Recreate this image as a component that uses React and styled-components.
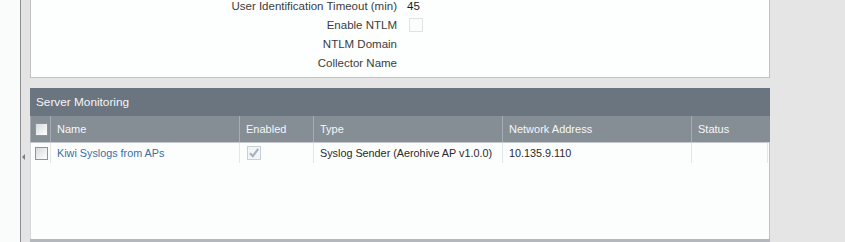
import styled, { createGlobalStyle } from "styled-components";

const GlobalStyle = createGlobalStyle`
  html, body {
    margin: 0;
    padding: 0;
    background: #e5e5e5;
  }
  body {
    font-family: "Liberation Sans", Arial, sans-serif;
    font-size: 11px;
    color: #1e1e1e;
  }
`;

const formRows = [
  { label: "User Identification Timeout (min)", value: "45" },
  { label: "Enable NTLM", checkbox: true },
  { label: "NTLM Domain" },
  { label: "Collector Name" },
];

const columns = [
  { key: "check", title: "", width: 20 },
  { key: "name", title: "Name", width: 189 },
  { key: "enabled", title: "Enabled", width: 74 },
  { key: "type", title: "Type", width: 189 },
  { key: "address", title: "Network Address", width: 189 },
  { key: "status", title: "Status", width: 76 },
];

const rows = [
  {
    name: "Kiwi Syslogs from APs",
    enabled: true,
    type: "Syslog Sender (Aerohive AP v1.0.0)",
    address: "10.135.9.110",
    status: "",
  },
];

const App = () => {
  return (
    <>
      <GlobalStyle />
      <Page>
        <LeftPane />
        <Splitter>
          <CollapseArrow />
        </Splitter>
        <Main>
          <FormPanel>
            {formRows.map((r) => (
              <FormRow key={r.label}>
                <FieldLabel>{r.label}</FieldLabel>
                <FieldValue>
                  {r.value}
                  {r.checkbox && <EmptyBox />}
                </FieldValue>
              </FormRow>
            ))}
          </FormPanel>
          <GridPanel>
            <GridTitle>Server Monitoring</GridTitle>
            <HeaderRow>
              {columns.map((c) => (
                <HeaderCell key={c.key} $w={c.width}>
                  {c.key === "check" ? <GridCheck /> : c.title}
                </HeaderCell>
              ))}
            </HeaderRow>
            <GridBody>
              {rows.map((r) => (
                <DataRow key={r.name}>
                  <DataCell $w={columns[0].width}>
                    <GridCheck />
                  </DataCell>
                  <DataCell $w={columns[1].width}>
                    <NameLink>{r.name}</NameLink>
                  </DataCell>
                  <DataCell $w={columns[2].width}>
                    {r.enabled && (
                      <DisabledCheck viewBox="0 0 14 14">
                        <rect x="0.5" y="0.5" width="13" height="13" fill="#f2f4f6" stroke="#c9d0d6" />
                        <path d="M3 7.2 L5.8 10.2 L11.2 2.8" fill="none" stroke="#9fb1c2" strokeWidth="2" />
                      </DisabledCheck>
                    )}
                  </DataCell>
                  <DataCell $w={columns[3].width}>{r.type}</DataCell>
                  <DataCell $w={columns[4].width}>{r.address}</DataCell>
                  <DataCell $w={columns[5].width}>{r.status}</DataCell>
                </DataRow>
              ))}
            </GridBody>
          </GridPanel>
        </Main>
      </Page>
    </>
  );
};

const Page = styled.div`
  display: flex;
  height: 242px;
  overflow: hidden;
`;
const LeftPane = styled.div`
  width: 20px;
  background: #fafcfc;
`;
const Splitter = styled.div`
  position: relative;
  width: 9px;
  background: #e4e4e4;
  border-left: 1px solid #8e9094;
`;
const CollapseArrow = styled.div`
  position: absolute;
  top: 154px;
  left: 1px;
  width: 0;
  height: 0;
  border-top: 3px solid transparent;
  border-bottom: 3px solid transparent;
  border-right: 3px solid #7a7e84;
`;
const Main = styled.div`
  display: flex;
  flex-direction: column;
  gap: 10px;
  width: 740px;
`;
const FormPanel = styled.div`
  margin-top: -4px;
  padding-bottom: 5px;
  background: #fdfefe;
  border: 1px solid #c2c2c2;
  border-top: none;
`;
const FormRow = styled.div`
  display: flex;
  align-items: center;
  height: 19px;
`;
const FieldLabel = styled.div`
  width: 366px;
  text-align: right;
  color: #3c3c3c;
  font-size: 11.5px;
`;
const FieldValue = styled.div`
  display: flex;
  align-items: center;
  padding-left: 10px;
  color: #1a1a1a;
  font-size: 11.5px;
`;
const EmptyBox = styled.span`
  display: block;
  margin-left: 2px;
  width: 12px;
  height: 12px;
  border: 1px solid #e0e2e4;
  background: #fbfcfc;
`;
const GridPanel = styled.div`
  display: flex;
  flex-direction: column;
  height: 152px;
  border-bottom: 3px solid #b4b8bc;
`;
const GridTitle = styled.div`
  height: 28px;
  line-height: 28px;
  padding-left: 6px;
  background: #6b7580;
  color: #f4f6f8;
  font-size: 11.8px;
`;
const HeaderRow = styled.div`
  display: flex;
  height: 26px;
  background: #858d95;
  border-bottom: 1px solid #c6cacf;
  border-left: 1px solid #a6acb2;
`;
const HeaderCell = styled.div`
  width: ${(p) => p.$w}px;
  box-sizing: border-box;
  display: flex;
  align-items: center;
  padding-left: ${(p) => (p.$w === 20 ? 4 : 6)}px;
  border-right: 1px solid #a6acb2;
  color: #f6f7f8;
  &:last-child {
    border-right: none;
  }
`;
const GridBody = styled.div`
  flex: 1;
  background: #fcfdfd;
  border-right: 1px solid #c2c2c2;
  border-left: 1px solid #d6d8da;
`;
const DataRow = styled.div`
  display: flex;
  height: 20px;
`;
const DataCell = styled.div`
  width: ${(p) => p.$w}px;
  box-sizing: border-box;
  display: flex;
  align-items: center;
  padding-left: ${(p) => (p.$w === 20 ? 4 : 6)}px;
  border-right: 1px solid #e3e6e8;
  white-space: nowrap;
  overflow: hidden;
  font-size: 10.8px;
  color: #2a2a2a;
`;
const GridCheck = styled.span`
  display: block;
  width: 11px;
  height: 11px;
  border: 1px solid #8f949a;
  background: linear-gradient(135deg, #d8dadc, #ffffff);
`;
const NameLink = styled.span`
  color: #3b6fa0;
`;
const DisabledCheck = styled.svg`
  width: 14px;
  height: 14px;
  margin-left: 1px;
`;

export default App;
